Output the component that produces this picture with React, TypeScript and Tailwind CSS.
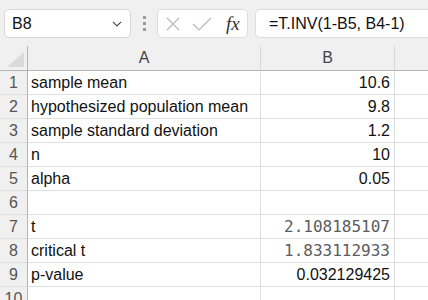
const rows: { label: string; value: string; mono?: boolean }[] = [
  { label: "sample mean", value: "10.6" },
  { label: "hypothesized population mean", value: "9.8" },
  { label: "sample standard deviation", value: "1.2" },
  { label: "n", value: "10" },
  { label: "alpha", value: "0.05" },
  { label: "", value: "" },
  { label: "t", value: "2.108185107", mono: true },
  { label: "critical t", value: "1.833112933", mono: true },
  { label: "p-value", value: "0.032129425" },
  { label: "", value: "" },
];

export default function App() {
  return (
    <div className="h-[300px] w-[428px] overflow-hidden bg-white font-['Liberation_Sans',Arial,sans-serif] text-[16px] text-[#111]">
      {/* formula bar */}
      <div className="flex h-[46px] items-start bg-[#f0f0f0] pl-[4px] pt-[9px]">
        <div className="flex h-[29px] w-[127px] items-center justify-between rounded-[5px] border border-[#d6d6d6] bg-white pl-[7px] pr-[8px]">
          <span className="text-[16px] text-[#111]">B8</span>
          <svg width="10" height="6" viewBox="0 0 10 6" fill="none" stroke="#444" strokeWidth="1.1">
            <path d="M1 0.8 L5 5 L9 0.8" />
          </svg>
        </div>
        <div className="flex h-[29px] w-[26px] flex-col items-center justify-center gap-[3px]">
          <span className="h-[3px] w-[3px] bg-[#9a9a9a]" />
          <span className="h-[3px] w-[3px] bg-[#9a9a9a]" />
          <span className="h-[3px] w-[3px] bg-[#9a9a9a]" />
        </div>
        <div className="flex h-[29px] w-[91px] items-center rounded-[5px] border border-[#dcdcdc] bg-white pl-[8px]">
          <svg width="14" height="14" viewBox="0 0 14 14" fill="none" stroke="#b8b8b8" strokeWidth="1.2">
            <path d="M1 1 L13 13 M13 1 L1 13" />
          </svg>
          <svg className="ml-[12px]" width="20" height="14" viewBox="0 0 20 14" fill="none" stroke="#b8b8b8" strokeWidth="1.2">
            <path d="M1 7 L7 13 L19 1" />
          </svg>
          <span className="ml-[14px] font-['Liberation_Serif',serif] text-[19px] italic leading-none text-[#333]">fx</span>
        </div>
        <div className="ml-[7px] flex h-[29px] flex-1 items-center rounded-l-[5px] border border-r-0 border-[#dcdcdc] bg-white pl-[13px]">
          <span className="text-[16px] text-[#111]">=T.INV(1-B5, B4-1)</span>
        </div>
      </div>

      {/* grid */}
      <div className="grid grid-cols-[28px_233px_134px_1fr]">
        <div className="flex h-[25px] items-end justify-end border-b border-r border-[#b4b4b4] bg-[#f0f0f0] pb-[3px] pr-[3px]">
          <svg width="17" height="15" viewBox="0 0 17 15">
            <polygon points="17,0 17,15 0,15" fill="#dadada" />
          </svg>
        </div>
        <div className="flex h-[25px] items-center justify-center border-b border-r border-b-[#b4b4b4] border-r-[#d8d8d8] bg-[#f0f0f0] text-[#444]">A</div>
        <div className="flex h-[25px] items-center justify-center border-b border-r border-b-[#b4b4b4] border-r-[#d8d8d8] bg-[#f0f0f0] text-[#444]">B</div>
        <div className="h-[25px] border-b border-[#b4b4b4] bg-[#f0f0f0]" />

        {rows.map((row, i) => (
          <div key={i} className="contents">
            <div className="flex h-[24px] items-center justify-center border-b border-r border-b-[#dedede] border-r-[#b4b4b4] bg-[#f0f0f0] text-[#555]">
              {i + 1}
            </div>
            <div className="flex h-[24px] items-center whitespace-nowrap border-b border-r border-[#dedede] pl-[3px]">
              {row.label}
            </div>
            <div
              className={
                row.mono
                  ? "flex h-[24px] items-center justify-end border-b border-r border-[#dedede] pr-[4px] font-['DejaVu_Sans_Mono',monospace] text-[16px] text-[#5c5c5c]"
                  : "flex h-[24px] items-center justify-end border-b border-r border-[#dedede] pr-[4px]"
              }
            >
              {row.value}
            </div>
            <div className="h-[24px] border-b border-[#dedede]" />
          </div>
        ))}
      </div>
    </div>
  );
}
